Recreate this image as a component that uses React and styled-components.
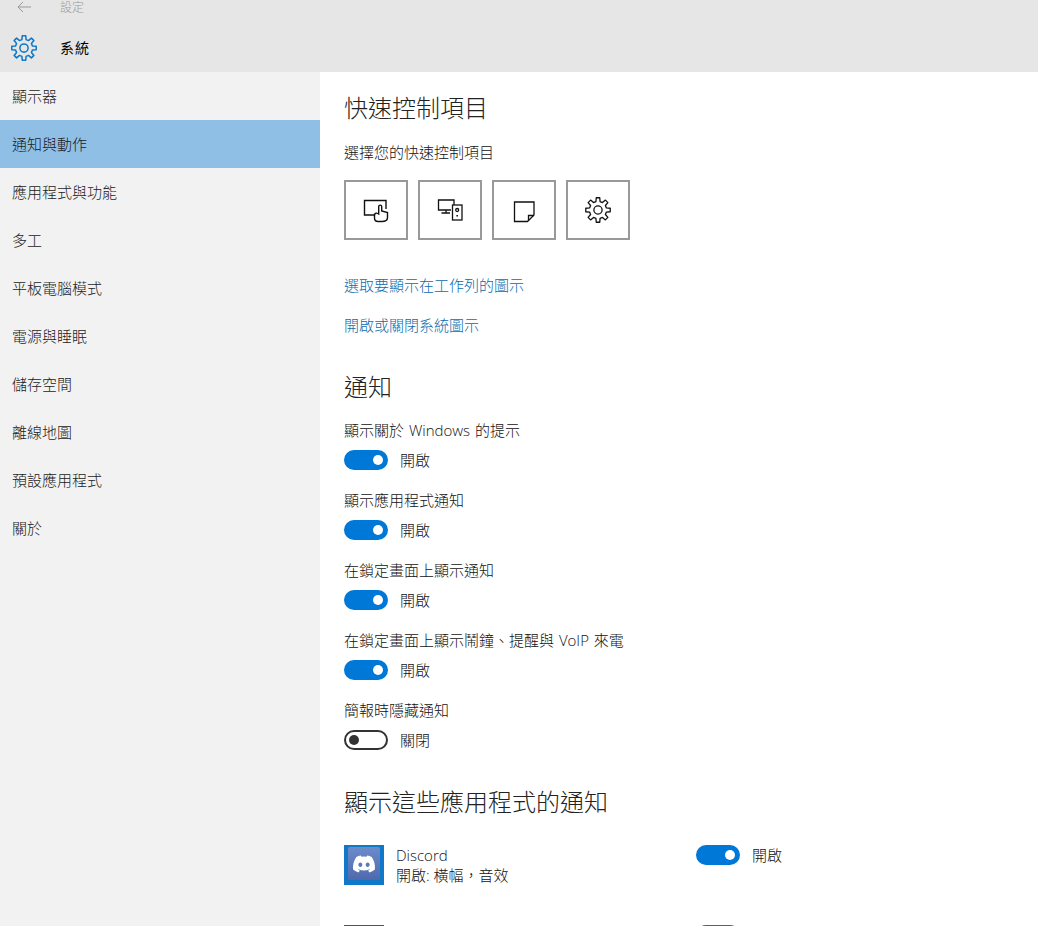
import React from 'react'
import styled, { createGlobalStyle } from 'styled-components'
import { FaDiscord } from 'react-icons/fa6'

const Global = createGlobalStyle`
  html, body { margin: 0; padding: 0; background: #fff; }
  body {
    font-family: "Open Sans", "Noto Sans CJK TC", sans-serif;
    color: #111;
    -webkit-font-smoothing: antialiased;
  }
`

const Page = styled.div`
  width: 1038px;
  height: 926px;
  overflow: hidden;
  display: flex;
  flex-direction: column;
`
const Header = styled.header`
  height: 72px;
  flex: none;
  background: #e6e6e6;
  display: flex;
  flex-direction: column;
`
const BackRow = styled.div`
  height: 14px;
  display: flex;
  align-items: center;
  padding-left: 17px;
  gap: 29px;
  color: #999;
  font-size: 12px;
  font-weight: 300;
`
const SystemRow = styled.div`
  height: 40px;
  margin-top: 14px;
  display: flex;
  align-items: center;
  padding-left: 11px;
  gap: 23px;
  font-size: 14px;
  line-height: 38px;
  letter-spacing: 1px;
  color: #000;
`
const Body = styled.div`
  flex: 1;
  display: flex;
  min-height: 0;
`
const Sidebar = styled.nav`
  width: 320px;
  flex: none;
  background: #f2f2f2;
`
const NavItem = styled.div`
  height: 48px;
  line-height: 48px;
  padding-left: 12px;
  font-size: 15px;
  font-weight: 300;
  color: #1a1a1a;
  background: ${p => (p.$active ? '#90bfe6' : 'transparent')};
`
const Main = styled.main`
  flex: 1;
  padding: 20px 24px 0;
  overflow: hidden;
`
const Heading = styled.h2`
  margin: 0;
  height: 32px;
  line-height: 32px;
  font-size: 24px;
  font-weight: 200;
  color: #222;
`
const Caption = styled.p`
  margin: 18px 0 0;
  height: 20px;
  line-height: 20px;
  font-size: 15px;
  font-weight: 300;
  color: #111;
`
const QuickGrid = styled.div`
  display: flex;
  gap: 10px;
  margin-top: 18px;
`
const QuickTile = styled.div`
  width: 64px;
  height: 60px;
  box-sizing: border-box;
  border: 2px solid #999;
  display: flex;
  align-items: center;
  justify-content: center;
`
const LinkText = styled.a`
  display: block;
  height: 20px;
  line-height: 20px;
  font-size: 15px;
  font-weight: 300;
  color: #0a6cad;
  margin-top: ${p => p.$top}px;
`
const NoticeHeading = styled(Heading)`
  margin-top: 36px;
`
const SettingList = styled.div`
  margin-top: 17px;
  display: flex;
  flex-direction: column;
  gap: 20px;
`
const Setting = styled.div`
  display: flex;
  flex-direction: column;
  gap: 10px;
`
const SettingLabel = styled.div`
  height: 20px;
  line-height: 20px;
  font-size: 15px;
  font-weight: 300;
  word-spacing: 1px;
  color: #111;
`
const SwitchRow = styled.div`
  height: 20px;
  display: flex;
  align-items: center;
  gap: 12px;
`
const SwitchLabel = styled.span`
  margin-top: -2px;
  font-size: 15px;
  font-weight: 300;
  color: #111;
`
const Track = styled.span`
  width: 44px;
  height: 20px;
  box-sizing: border-box;
  border-radius: 10px;
  position: relative;
  flex: none;
  background: ${p => (p.$on ? '#0078d7' : '#fff')};
  border: 2px solid ${p => (p.$on ? '#0078d7' : '#333')};
`
const Knob = styled.span`
  position: absolute;
  top: 3px;
  width: 10px;
  height: 10px;
  border-radius: 50%;
  background: ${p => (p.$on ? '#fff' : '#333')};
  ${p => (p.$on ? 'right: 3px;' : 'left: 3px;')}
`
const AppHeading = styled(Heading)`
  margin-top: 36px;
`
const AppList = styled.div`
  margin-top: 27px;
  display: flex;
  flex-direction: column;
  gap: 40px;
`
const AppRow = styled.div`
  display: flex;
  height: 40px;
`
const AppInfo = styled.div`
  width: 352px;
  flex: none;
  display: flex;
  gap: 12px;
`
const AppTile = styled.div`
  width: 40px;
  height: 40px;
  flex: none;
  background: ${p => p.$color};
  display: flex;
  align-items: center;
  justify-content: center;
`
const AppTileInner = styled.div`
  width: 32px;
  height: 33px;
  margin-top: -3px;
  border-radius: 2px;
  background: linear-gradient(180deg, #6c8bcb 0%, #4f69ad 100%);
  display: flex;
  align-items: center;
  justify-content: center;
  color: #fff;
`
const AppText = styled.div`
  font-size: 15px;
  font-weight: 300;
  line-height: 20px;
  color: #111;
`

const gearPath = (cx, cy, outer, inner) => {
  const teeth = 8
  const pts = []
  for (let i = 0; i < teeth; i++) {
    const a = (i / teeth) * Math.PI * 2
    const s = Math.PI / teeth
    const p = (r, t) => `${(cx + r * Math.cos(t)).toFixed(2)} ${(cy + r * Math.sin(t)).toFixed(2)}`
    pts.push(p(inner, a - s * 0.62), p(outer, a - s * 0.36), p(outer, a + s * 0.36), p(inner, a + s * 0.62))
  }
  return `M${pts.join('L')}Z`
}

const Gear = ({ size, color, stroke = 1.2 }) => (
  <svg width={size} height={size} viewBox="0 0 24 24" fill="none" stroke={color} strokeWidth={stroke} strokeLinejoin="round">
    <path d={gearPath(12, 12, 11.4, 8)} />
    <circle cx="12" cy="12" r="3.8" />
  </svg>
)

const TabletIcon = () => (
  <svg width="26" height="26" viewBox="0 0 26 26" fill="none" stroke="#111" strokeWidth="1.4">
    <path d="M11 18H1.5V3.5H23V12" />
    <path d="M11.5 17.5v3.5c0 2.4 1.8 3.5 3.6 3.5h3.8c2.5 0 5.6-1 5.6-4v-5l-5.8-1.5V9.5c0-1.8-3-1.8-3 0v7.5l-1-.5c-1-.6-3-.5-3 1z" fill="#fff" />
  </svg>
)

const DevicesIcon = () => (
  <svg width="26" height="26" viewBox="0 0 26 26" fill="none" stroke="#111" strokeWidth="1.3">
    <path d="M14 13H1.5V3h15.5v5" />
    <path d="M9 13v3M4.5 16H13" />
    <rect x="15.5" y="8" width="9.5" height="15" fill="#fff" />
    <circle cx="20.2" cy="13" r="1.5" />
    <path d="M19.4 18h1.6v1.6h-1.6z" fill="#111" stroke="none" />
  </svg>
)

const NoteIcon = () => (
  <svg width="26" height="26" viewBox="0 0 26 26" fill="none" stroke="#111" strokeWidth="1.3">
    <path d="M3.5 5h19.5v13l-6.5 6.5h-13z" />
    <path d="M23 18.5h-5.5v5" />
  </svg>
)

const nav = ['顯示器', '通知與動作', '應用程式與功能', '多工', '平板電腦模式', '電源與睡眠', '儲存空間', '離線地圖', '預設應用程式', '關於']

const settings = [
  { label: '顯示關於 Windows 的提示', on: true },
  { label: '顯示應用程式通知', on: true },
  { label: '在鎖定畫面上顯示通知', on: true },
  { label: '在鎖定畫面上顯示鬧鐘、提醒與 VoIP 來電', on: true },
  { label: '簡報時隱藏通知', on: false },
]

const Switch = ({ on, label }) => (
  <SwitchRow>
    <Track $on={on}>
      <Knob $on={on} />
    </Track>
    {label && <SwitchLabel>{label}</SwitchLabel>}
  </SwitchRow>
)

export default function App() {
  return (
    <Page>
      <Global />
      <Header>
        <BackRow>
          <svg width="14" height="12" viewBox="0 0 14 12" fill="none" stroke="#999" strokeWidth="1">
            <path d="M14 6H1M6 1 1 6l5 5" />
          </svg>
          設定
        </BackRow>
        <SystemRow>
          <Gear size={26} color="#0f78c8" stroke={1.4} />
          系統
        </SystemRow>
      </Header>
      <Body>
        <Sidebar>
          {nav.map((item, i) => (
            <NavItem key={item} $active={i === 1}>{item}</NavItem>
          ))}
        </Sidebar>
        <Main>
          <Heading>快速控制項目</Heading>
          <Caption>選擇您的快速控制項目</Caption>
          <QuickGrid>
            <QuickTile><TabletIcon /></QuickTile>
            <QuickTile><DevicesIcon /></QuickTile>
            <QuickTile><NoteIcon /></QuickTile>
            <QuickTile><Gear size={26} color="#111" /></QuickTile>
          </QuickGrid>
          <LinkText $top={35}>選取要顯示在工作列的圖示</LinkText>
          <LinkText $top={20}>開啟或關閉系統圖示</LinkText>
          <NoticeHeading>通知</NoticeHeading>
          <SettingList>
            {settings.map(s => (
              <Setting key={s.label}>
                <SettingLabel>{s.label}</SettingLabel>
                <Switch on={s.on} label={s.on ? '開啟' : '關閉'} />
              </Setting>
            ))}
          </SettingList>
          <AppHeading>顯示這些應用程式的通知</AppHeading>
          <AppList>
            <AppRow>
              <AppInfo>
                <AppTile $color="#0f78c8">
                  <AppTileInner><FaDiscord size={24} /></AppTileInner>
                </AppTile>
                <AppText>Discord<br />開啟: 橫幅，音效</AppText>
              </AppInfo>
              <Switch on label="開啟" />
            </AppRow>
            <AppRow>
              <AppInfo>
                <AppTile $color="#7a4a22" />
              </AppInfo>
              <Switch on />
            </AppRow>
          </AppList>
        </Main>
      </Body>
    </Page>
  )
}
